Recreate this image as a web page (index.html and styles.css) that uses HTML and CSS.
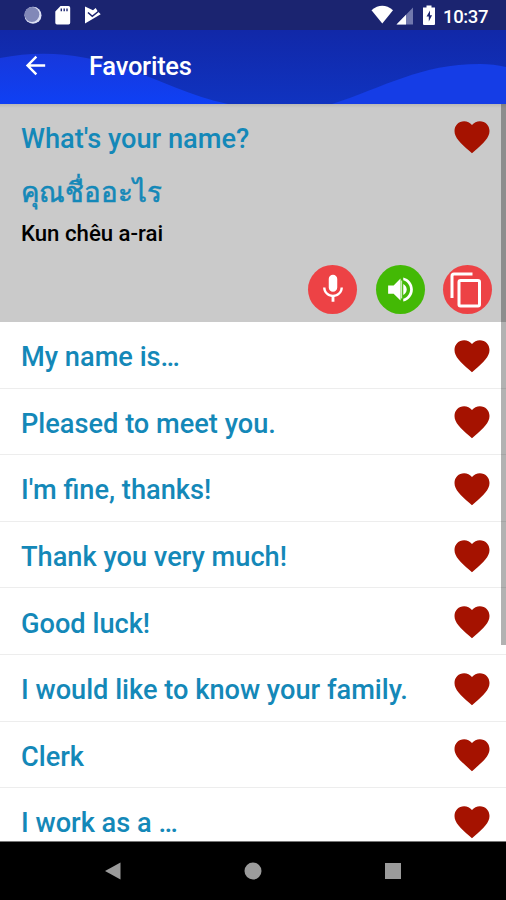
FILE: index.html
```html
<!DOCTYPE html>
<html lang="en">
<head>
<meta charset="utf-8">
<title>Favorites</title>
<link rel="stylesheet" href="styles.css">
</head>
<body>
<svg class="defs" width="0" height="0" aria-hidden="true">
  <symbol id="heart" viewBox="0 0 24 24"><path d="M12 21.350l-1.450-1.320C5.400 15.360 2 12.280 2 8.500 2 5.420 4.420 3 7.500 3c1.740 0 3.410.81 4.500 2.090C13.090 3.810 14.760 3 16.500 3 19.580 3 22 5.420 22 8.500c0 3.780-3.400 6.860-8.550 11.540L12 21.350z"/></symbol>
</svg>
<div class="screen">
  <div class="status">
    <svg class="status-left" width="86" height="22" viewBox="0 0 86 22">
      <circle cx="9" cy="11.300" r="8.500" fill="#dce0f4"/>
      <circle cx="7.900" cy="10.500" r="7.400" fill="#8188b8"/>
      <path d="M36.500 2h8a1.700 1.700 0 0 1 1.700 1.700v15a1.700 1.700 0 0 1-1.700 1.700H33a1.700 1.700 0 0 1-1.700-1.700V7.500z" fill="#fff"/>
      <path d="M37.300 4.500v2.700M40.200 4.500v2.700M43 4.500v2.700" stroke="#1b2470" stroke-width="1.400"/>
      <path d="M61 2.500l8 3.800 2.700-2.200 1.800 3 3.200 3.200L61 19.500z" fill="#fff"/>
      <path d="M64 8.500l4.300 3.800L75.500 6.500" fill="none" stroke="#1b2470" stroke-width="1.600"/>
    </svg>
    <div class="status-right">
      <svg width="66" height="22" viewBox="0 0 66 22">
        <path d="M.5 6.200Q11.300-2.500 22 6.200L11.300 19.500z" fill="#fff"/>
        <path d="M42 3.500v17H25.500z" fill="#7178ad"/>
        <path d="M35 10.700v9.800h-9.500z" fill="#fff"/>
        <path d="M55.500 1.500h5v2H64V20a1 1 0 0 1-1 1H53a1 1 0 0 1-1-1V3.500h3.500z" fill="#fff"/>
        <path d="M59 6.500l-3.500 6h2.300v5l3.300-6.200h-2.100z" fill="#1b2470"/>
      </svg>
      <span class="time">10:37</span>
    </div>
  </div>
  <header class="toolbar">
    <svg class="wave" width="506" height="74" viewBox="0 0 506 74">
      <defs><linearGradient id="sea" x1="0" y1="0" x2="0" y2="1"><stop offset="0" stop-color="#1738dc"/><stop offset="1" stop-color="#0f40f4"/></linearGradient></defs>
      <path d="M0 28C45 19 86 25 125 38C160 50 190 66 228 74H0z" fill="url(#sea)"/>
      <path d="M332 74C385 57 420 34 480 34Q494 34 506 37V74z" fill="#153de6"/>
    </svg>
    <svg class="back" width="29" height="29" viewBox="0 0 24 24"><path d="M20 11H7.830l5.590-5.590L12 4l-8 8 8 8 1.410-1.410L7.830 13H20z" fill="#fff"/></svg>
    <h1>Favorites</h1>
  </header>
  <main class="list">
    <section class="card">
      <div class="card-head"><span class="phrase">What's your name?</span><svg class="heart"><use href="#heart"/></svg></div>
      <div class="thai" lang="th">คุณชื่ออะไร</div>
      <div class="roman">Kun chêu a-rai</div>
      <div class="actions">
        <span class="action"><svg width="34" height="34" viewBox="0 0 24 24"><path fill="#fff" d="M12 14c1.660 0 2.990-1.340 2.990-3L15 5c0-1.660-1.340-3-3-3S9 3.340 9 5v6c0 1.660 1.340 3 3 3zm5.300-3c0 3-2.540 5.100-5.300 5.100S6.700 14 6.700 11H5c0 3.410 2.720 6.230 6 6.720V21h2v-3.280c3.280-.48 6-3.300 6-6.720h-1.700z"/></svg></span>
        <span class="action green"><svg width="33" height="33" viewBox="0 0 24 24"><path fill="#fff" d="M3 9v6h4l5 5V4L7 9H3zM14 3.230v2.060c2.890.86 5 3.540 5 6.710s-2.110 5.850-5 6.710v2.060c4.010-.91 7-4.490 7-8.770s-2.990-7.860-7-8.770z"/><path fill="#fff" d="M16.500 12c0-1.770-1.020-3.290-2.500-4.030v8.050c1.480-.73 2.500-2.250 2.500-4.020z"/><path fill="#c9edb8" d="M12 5.500h1.200v13H12z"/></svg></span>
        <span class="action"><svg width="49" height="49" viewBox="0 0 49 49" fill="none" stroke="#fff" stroke-width="3"><path d="M9 33V11a2 2 0 0 1 2-2h18.500"/><rect x="16" y="15.500" width="20.500" height="25.500" rx="1.500"/></svg></span>
      </div>
    </section>
    <div class="row"><span class="phrase">My name is…</span><svg class="heart"><use href="#heart"/></svg></div>
    <div class="row"><span class="phrase">Pleased to meet you.</span><svg class="heart"><use href="#heart"/></svg></div>
    <div class="row"><span class="phrase">I'm fine, thanks!</span><svg class="heart"><use href="#heart"/></svg></div>
    <div class="row"><span class="phrase">Thank you very much!</span><svg class="heart"><use href="#heart"/></svg></div>
    <div class="row"><span class="phrase">Good luck!</span><svg class="heart"><use href="#heart"/></svg></div>
    <div class="row"><span class="phrase">I would like to know your family.</span><svg class="heart"><use href="#heart"/></svg></div>
    <div class="row"><span class="phrase">Clerk</span><svg class="heart"><use href="#heart"/></svg></div>
    <div class="row"><span class="phrase">I work as a …</span><svg class="heart"><use href="#heart"/></svg></div>
    <div class="scrollbar"></div>
  </main>
  <nav class="nav">
    <svg width="18" height="18" viewBox="0 0 18 18"><path d="M16.500.5v17L1 9z"/></svg>
    <svg width="18" height="18" viewBox="0 0 18 18"><circle cx="9" cy="9" r="8.500"/></svg>
    <svg width="18" height="18" viewBox="0 0 18 18"><path d="M1 1h16v16H1z"/></svg>
  </nav>
</div>
</body>
</html>
```
FILE: styles.css
```css
* { box-sizing: border-box; }
body { margin: 0; font-family: Roboto, "Noto Sans", sans-serif; }
svg { display: block; flex: none; }
.defs { position: absolute; }
.screen { width: 506px; height: 900px; display: flex; flex-direction: column; overflow: hidden; }
.status { height: 30px; flex: none; display: flex; justify-content: space-between; align-items: center; padding: 0 18px 0 24px; background: #1b2470; }
.status-right { display: flex; align-items: center; gap: 6px; }
.time { font-size: 18.500px; font-weight: 500; line-height: 22px; letter-spacing: -.4px; color: #fff; padding-top: 3px; }
.toolbar { position: relative; height: 74px; flex: none; display: flex; align-items: center; padding: 0 0 4px 21px; background: linear-gradient(#1128a8, #1033c0); }
.wave { position: absolute; left: 0; top: 0; }
.back, h1 { position: relative; }
h1 { margin: 0 0 0 39px; padding-top: 1px; font-size: 25.500px; font-weight: 500; line-height: 32px; letter-spacing: -.25px; color: #fff; }
.list { position: relative; flex: 1; min-height: 0; overflow: hidden; background: #fff; border-bottom: 1px solid #777; }
.card { height: 218px; padding: 12px 13px 0 21px; background: linear-gradient(#b9b9b5, #cacaca 4px); }
.card-head { height: 42px; display: flex; justify-content: space-between; align-items: center; }
.phrase { font-size: 27.200px; font-weight: 500; line-height: 34px; color: #1488b8; white-space: nowrap; padding-top: 3px; }
.heart { width: 42px; height: 42px; fill: #a51200; }
.thai { margin-top: 16px; height: 38px; line-height: 38px; font-size: 27.600px; font-weight: 500; color: #1488b8; -webkit-text-stroke: .6px #1488b8; }
.roman { margin-top: 7px; height: 28px; line-height: 28px; font-size: 22.200px; font-weight: 500; color: #000; }
.actions { margin-top: 17.500px; display: flex; justify-content: flex-end; gap: 18.500px; padding-right: 1px; }
.action { width: 49px; height: 49px; border-radius: 50%; background: #ed4245; display: flex; align-items: center; justify-content: center; }
.green { background: #43b905; }
.row { height: 66.600px; display: flex; align-items: center; justify-content: space-between; padding: 2px 13px 0 21px; border-bottom: 1px solid #ededed; }
.scrollbar { position: absolute; right: 0; top: 0; width: 5px; height: 541px; background: rgba(0, 0, 0, .3); }
.nav { height: 58px; flex: none; background: #000; display: flex; justify-content: center; align-items: center; gap: 122px; fill: #9b9b9b; }
```
